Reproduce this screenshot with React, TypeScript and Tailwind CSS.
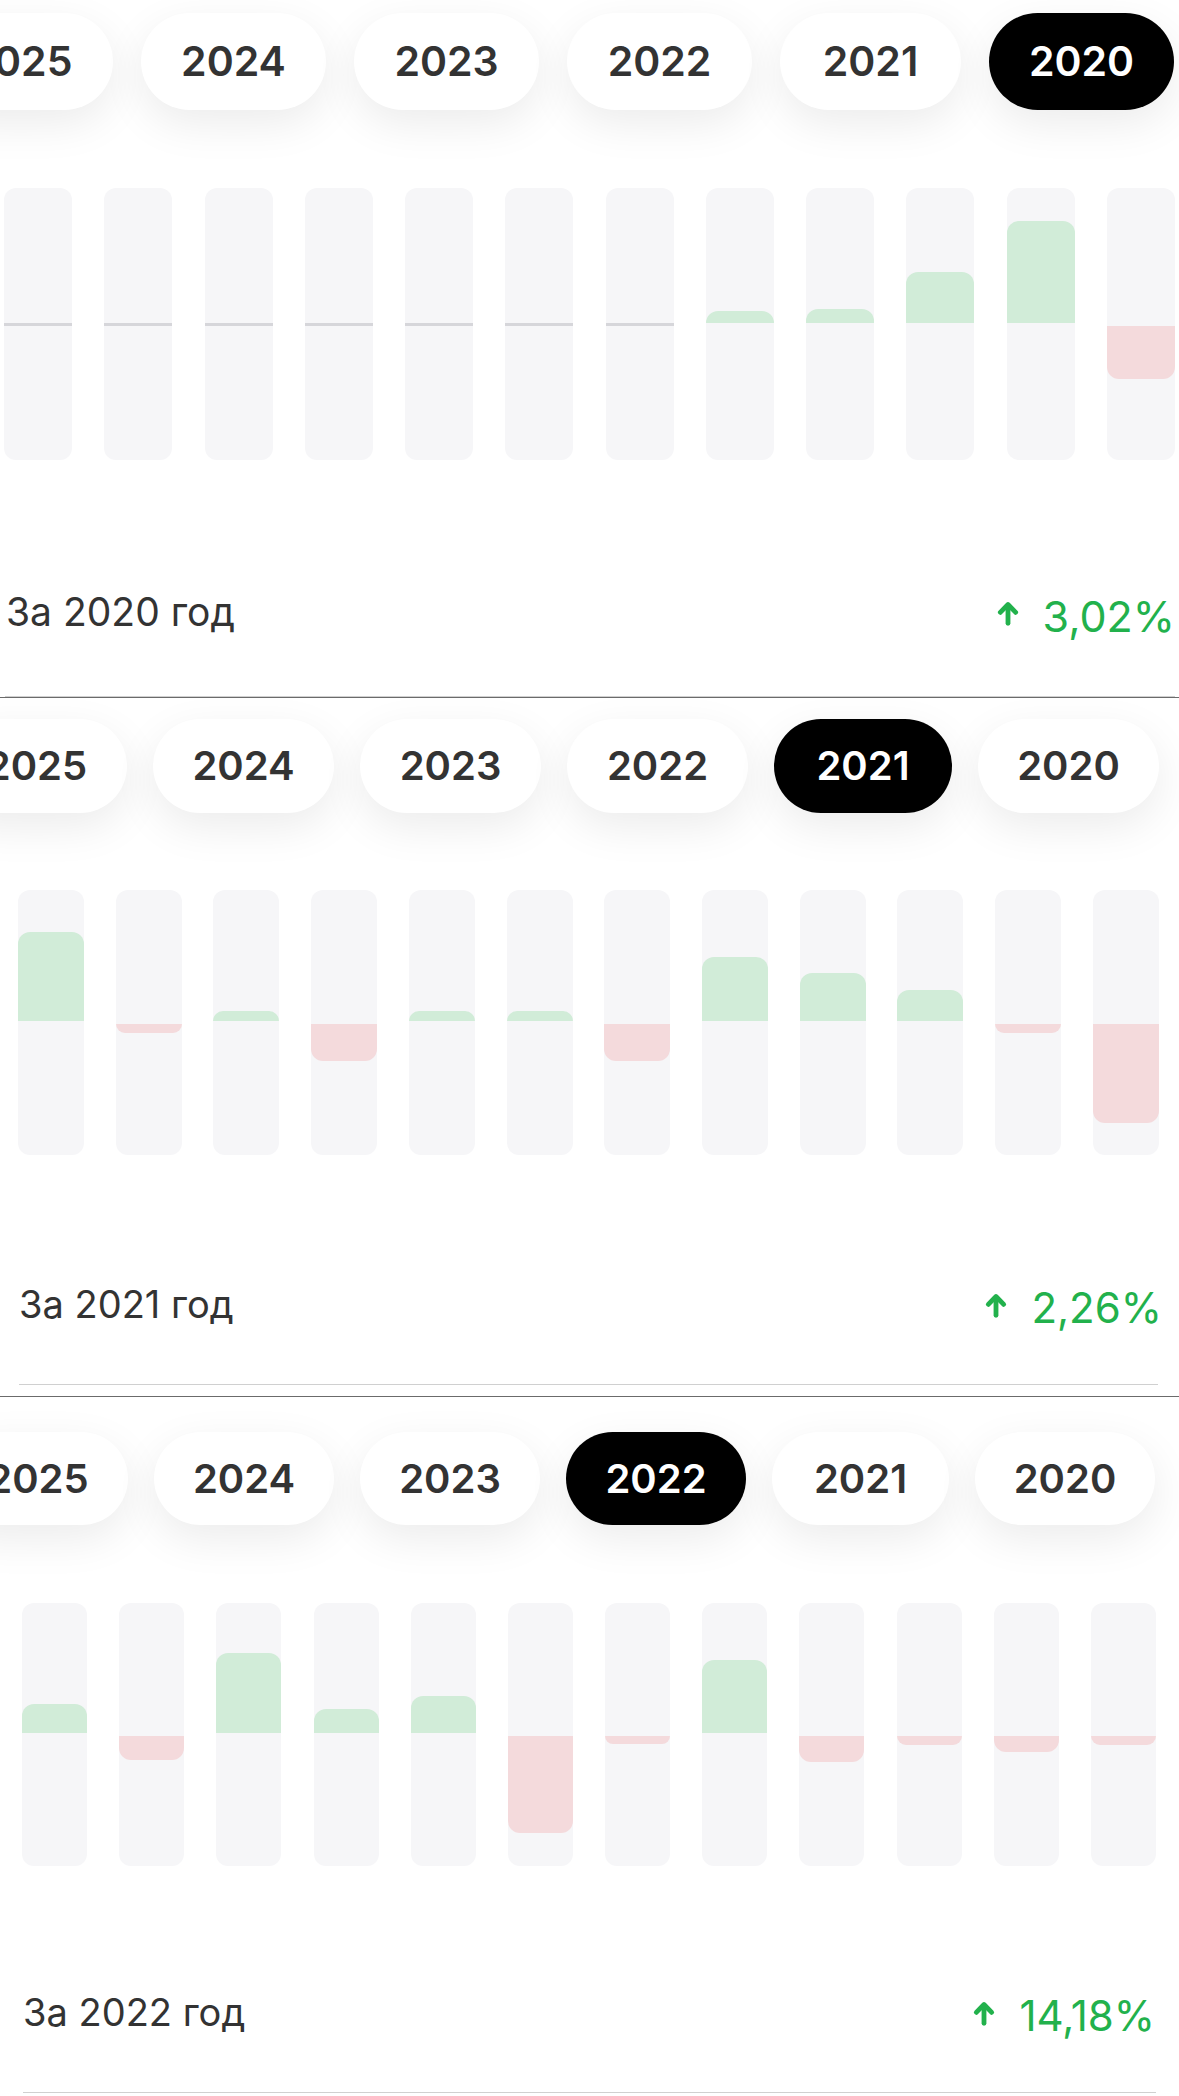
import React from "react";

const YEARS = ["2025", "2024", "2023", "2022", "2021", "2020"];

type SectionProps = {
  selected: string;
  rootCls: string;
  pillRowCls: string;
  pillCls: string;
  pill21Cls: string;
  chartCls: string;
  barCls: string;
  values: number[];
  footerCls: string;
  labelCls: string;
  pctCls: string;
  lineCls: string;
  label: string;
  pct: string;
};

function Arrow() {
  return (
    <svg
      viewBox="0 0 24 26"
      className="w-[24px] h-[25px] mt-[6px] shrink-0"
      fill="none"
      stroke="#22b14c"
      strokeWidth="5"
      strokeLinecap="round"
      strokeLinejoin="round"
    >
      <path d="M12 23.2V4.5" />
      <path d="M4 11.8L12 3.6l8 8.2" />
    </svg>
  );
}

function Bar({ v, barCls }: { v: number; barCls: string }) {
  return (
    <div className={`${barCls} h-full rounded-[12px] bg-[#f6f6f8] flex flex-col`}>
      <div className="flex-1 flex flex-col justify-end">
        {v > 0 && <div className="rounded-t-[12px] bg-[#d1ecd8]" style={{ height: v }} />}
      </div>
      <div className={`h-[3px] ${v === 0 ? "bg-[#d6d6da]" : ""}`} />
      <div className="flex-1 flex flex-col">
        {v < 0 && <div className="rounded-b-[12px] bg-[#f4dadc]" style={{ height: -v }} />}
      </div>
    </div>
  );
}

function Section(p: SectionProps) {
  return (
    <div className={`relative flex flex-col overflow-hidden bg-white ${p.rootCls}`}>
      <div className={`flex justify-end ${p.pillRowCls}`}>
        {YEARS.map((y) => {
          const sel = y === p.selected;
          return (
            <div
              key={y}
              className={`shrink-0 rounded-full flex items-center justify-center font-semibold leading-none shadow-[0_14px_44px_rgba(0,0,0,0.08)] ${
                sel ? "bg-black text-white" : "bg-white text-[#333333]"
              } ${y === "2021" ? p.pill21Cls : p.pillCls}`}
            >
              {y}
            </div>
          );
        })}
      </div>
      <div className={`flex justify-between ${p.chartCls}`}>
        {p.values.map((v, i) => (
          <Bar key={i} v={v} barCls={p.barCls} />
        ))}
      </div>
      <div className={`flex items-baseline justify-between ${p.footerCls}`}>
        <span className={`leading-none text-[#333333] ${p.labelCls}`}>{p.label}</span>
        <div className="flex items-start gap-[23px]">
          <Arrow />
          <span className={`leading-none text-[#22b14c] ${p.pctCls}`}>{p.pct}</span>
        </div>
      </div>
      <div className={`h-px bg-[#d0d0d0] ${p.lineCls}`} />
    </div>
  );
}

export default function App() {
  return (
    <div className="w-[1179px] h-[2096px] overflow-hidden bg-white font-['Inter',sans-serif]">
      <Section
        selected="2020"
        rootCls="h-[697px] pt-[13px]"
        pillRowCls="h-[97px] gap-[28px] pr-[5px]"
        pillCls="w-[185px] text-[41px]"
        pill21Cls="w-[181px] text-[41px]"
        chartCls="mt-[78px] h-[272px] pl-[4px] pr-[4px]"
        barCls="w-[68px]"
        values={[0, 0, 0, 0, 0, 0, 0, 12, 14, 51, 102, -53]}
        footerCls="mt-[132px] pl-[6px] pr-[4px]"
        labelCls="text-[39px]"
        pctCls="text-[43px]"
        lineCls="mt-[58px] ml-[5px] mr-[4px]"
        label="За 2020 год"
        pct="3,02%"
      />
      <Section
        selected="2021"
        rootCls="h-[699px] border-t border-[#6b6b6b] pt-[21px]"
        pillRowCls="h-[94px] gap-[26px] pr-[20px]"
        pillCls="w-[181px] text-[40px]"
        pill21Cls="w-[178px] text-[40px]"
        chartCls="mt-[77px] h-[265px] pl-[18px] pr-[20px]"
        barCls="w-[66px]"
        values={[89, -9, 10, -37, 10, 10, -37, 64, 48, 31, -9, -99]}
        footerCls="mt-[130px] pl-[19px] pr-[17px]"
        labelCls="text-[38px]"
        pctCls="text-[42px]"
        lineCls="mt-[55px] ml-[19px] mr-[21px]"
        label="За 2021 год"
        pct="2,26%"
      />
      <Section
        selected="2022"
        rootCls="h-[700px] border-t border-[#6b6b6b] pt-[35px]"
        pillRowCls="h-[93px] gap-[26px] pr-[24px]"
        pillCls="w-[180px] text-[40px]"
        pill21Cls="w-[177px] text-[40px]"
        chartCls="mt-[78px] h-[263px] pl-[22px] pr-[23px]"
        barCls="w-[65px]"
        values={[29, -24, 80, 24, 37, -97, -8, 73, -26, -9, -16, -9]}
        footerCls="mt-[127px] pl-[23px] pr-[24px]"
        labelCls="text-[38px]"
        pctCls="text-[42px]"
        lineCls="mt-[55px] ml-[23px] mr-[23px]"
        label="За 2022 год"
        pct="14,18%"
      />
    </div>
  );
}
